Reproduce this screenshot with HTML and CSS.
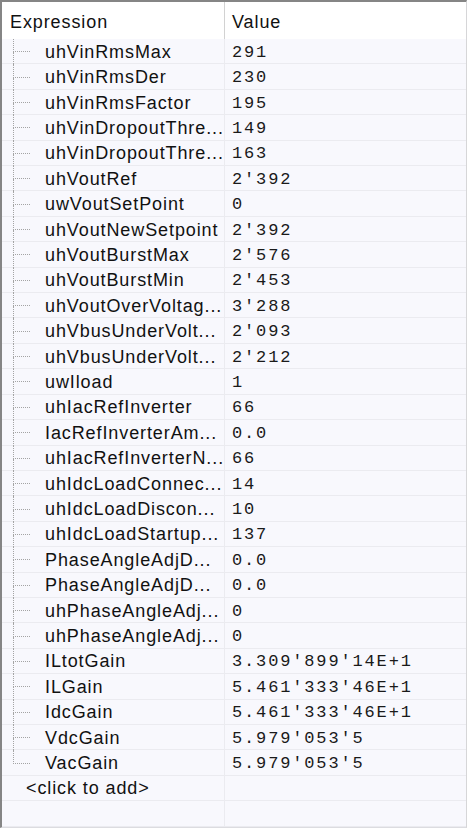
FILE: index.html
```html
<!DOCTYPE html>
<html>
<head>
<meta charset="utf-8">
<link rel="stylesheet" href="styles.css">
</head>
<body>
<div class="panel">
  <div class="header">
    <div class="hcell">Expression</div>
    <div class="hcell val">Value</div>
  </div>
  <div class="rows">
    <div class="row"><div class="name"><span class="branch"><span class="stub"></span><span class="tail"></span></span><span class="label">uhVinRmsMax</span></div><div class="value">291</div></div>
    <div class="row"><div class="name"><span class="branch"><span class="stub"></span><span class="tail"></span></span><span class="label">uhVinRmsDer</span></div><div class="value">230</div></div>
    <div class="row"><div class="name"><span class="branch"><span class="stub"></span><span class="tail"></span></span><span class="label">uhVinRmsFactor</span></div><div class="value">195</div></div>
    <div class="row"><div class="name"><span class="branch"><span class="stub"></span><span class="tail"></span></span><span class="label">uhVinDropoutThre...</span></div><div class="value">149</div></div>
    <div class="row"><div class="name"><span class="branch"><span class="stub"></span><span class="tail"></span></span><span class="label">uhVinDropoutThre...</span></div><div class="value">163</div></div>
    <div class="row"><div class="name"><span class="branch"><span class="stub"></span><span class="tail"></span></span><span class="label">uhVoutRef</span></div><div class="value">2'392</div></div>
    <div class="row"><div class="name"><span class="branch"><span class="stub"></span><span class="tail"></span></span><span class="label">uwVoutSetPoint</span></div><div class="value">0</div></div>
    <div class="row"><div class="name"><span class="branch"><span class="stub"></span><span class="tail"></span></span><span class="label">uhVoutNewSetpoint</span></div><div class="value">2'392</div></div>
    <div class="row"><div class="name"><span class="branch"><span class="stub"></span><span class="tail"></span></span><span class="label">uhVoutBurstMax</span></div><div class="value">2'576</div></div>
    <div class="row"><div class="name"><span class="branch"><span class="stub"></span><span class="tail"></span></span><span class="label">uhVoutBurstMin</span></div><div class="value">2'453</div></div>
    <div class="row"><div class="name"><span class="branch"><span class="stub"></span><span class="tail"></span></span><span class="label">uhVoutOverVoltag...</span></div><div class="value">3'288</div></div>
    <div class="row"><div class="name"><span class="branch"><span class="stub"></span><span class="tail"></span></span><span class="label">uhVbusUnderVolt...</span></div><div class="value">2'093</div></div>
    <div class="row"><div class="name"><span class="branch"><span class="stub"></span><span class="tail"></span></span><span class="label">uhVbusUnderVolt...</span></div><div class="value">2'212</div></div>
    <div class="row"><div class="name"><span class="branch"><span class="stub"></span><span class="tail"></span></span><span class="label">uwIload</span></div><div class="value">1</div></div>
    <div class="row"><div class="name"><span class="branch"><span class="stub"></span><span class="tail"></span></span><span class="label">uhIacRefInverter</span></div><div class="value">66</div></div>
    <div class="row"><div class="name"><span class="branch"><span class="stub"></span><span class="tail"></span></span><span class="label">IacRefInverterAm...</span></div><div class="value">0.0</div></div>
    <div class="row"><div class="name"><span class="branch"><span class="stub"></span><span class="tail"></span></span><span class="label">uhIacRefInverterN...</span></div><div class="value">66</div></div>
    <div class="row"><div class="name"><span class="branch"><span class="stub"></span><span class="tail"></span></span><span class="label">uhIdcLoadConnec...</span></div><div class="value">14</div></div>
    <div class="row"><div class="name"><span class="branch"><span class="stub"></span><span class="tail"></span></span><span class="label">uhIdcLoadDiscon...</span></div><div class="value">10</div></div>
    <div class="row"><div class="name"><span class="branch"><span class="stub"></span><span class="tail"></span></span><span class="label">uhIdcLoadStartup...</span></div><div class="value">137</div></div>
    <div class="row"><div class="name"><span class="branch"><span class="stub"></span><span class="tail"></span></span><span class="label">PhaseAngleAdjD...</span></div><div class="value">0.0</div></div>
    <div class="row"><div class="name"><span class="branch"><span class="stub"></span><span class="tail"></span></span><span class="label">PhaseAngleAdjD...</span></div><div class="value">0.0</div></div>
    <div class="row"><div class="name"><span class="branch"><span class="stub"></span><span class="tail"></span></span><span class="label">uhPhaseAngleAdj...</span></div><div class="value">0</div></div>
    <div class="row"><div class="name"><span class="branch"><span class="stub"></span><span class="tail"></span></span><span class="label">uhPhaseAngleAdj...</span></div><div class="value">0</div></div>
    <div class="row"><div class="name"><span class="branch"><span class="stub"></span><span class="tail"></span></span><span class="label">ILtotGain</span></div><div class="value">3.309'899'14E+1</div></div>
    <div class="row"><div class="name"><span class="branch"><span class="stub"></span><span class="tail"></span></span><span class="label">ILGain</span></div><div class="value">5.461'333'46E+1</div></div>
    <div class="row"><div class="name"><span class="branch"><span class="stub"></span><span class="tail"></span></span><span class="label">IdcGain</span></div><div class="value">5.461'333'46E+1</div></div>
    <div class="row"><div class="name"><span class="branch"><span class="stub"></span><span class="tail"></span></span><span class="label">VdcGain</span></div><div class="value">5.979'053'5</div></div>
    <div class="row"><div class="name"><span class="branch"><span class="stub"></span><span class="tail last"></span></span><span class="label">VacGain</span></div><div class="value">5.979'053'5</div></div>
    <div class="row"><div class="name add"><span class="label">&lt;click to add&gt;</span></div><div class="value"></div></div>
    <div class="row"><div class="name"></div><div class="value"></div></div>
  </div>
</div>
</body>
</html>
```
FILE: styles.css
```css
html, body {
  margin: 0;
  padding: 0;
  background: #ffffff;
}

.panel {
  box-sizing: border-box;
  width: 467px;
  height: 828px;
  border-top: 2px solid #858585;
  border-left: 2px solid #858585;
  border-right: 1px solid #d6d6d8;
  border-bottom: 1px solid #dcdce0;
  overflow: hidden;
  background: #f8f8fd;
  font-family: "Liberation Sans", Arial, sans-serif;
  font-size: 18px;
  letter-spacing: 0.9px;
  color: #111;
}

.header {
  display: grid;
  grid-template-columns: 223px 1fr;
  height: 37px;
  background: #ffffff;
}

.hcell {
  display: flex;
  align-items: center;
  padding-left: 8px;
  padding-top: 3px;
  border-right: 1px solid #d2d2d2;
}

.hcell.val {
  border-right: none;
  padding-left: 7px;
}

.row {
  box-sizing: border-box;
  display: grid;
  grid-template-columns: 223px 1fr;
  height: 25.42px;
  border-bottom: 1px solid #ebebf0;
}

.name {
  display: flex;
  align-items: stretch;
  border-right: 1px solid #ebebf0;
  white-space: nowrap;
  min-width: 0;
}

.branch {
  display: flex;
  flex-direction: column;
  width: 17px;
  margin-left: 11px;
  margin-bottom: -1px;
  flex: none;
}

.stub {
  flex: 1;
  border-left: 1px dotted #a4a4a4;
  border-bottom: 1px dotted #a4a4a4;
}

.tail {
  flex: 1;
  border-left: 1px dotted #a4a4a4;
}

.tail.last {
  border-left-color: transparent;
}

.label {
  display: flex;
  align-items: center;
  margin-left: 15px;
  padding-top: 2px;
}

.name.add .label {
  margin-left: 24px;
}

.value {
  display: flex;
  align-items: center;
  padding-left: 7px;
  padding-top: 2px;
  font-family: "Liberation Mono", "Courier New", monospace;
  font-size: 17px;
  letter-spacing: 1.85px;
  white-space: nowrap;
  color: #1a1a1a;
}
```
